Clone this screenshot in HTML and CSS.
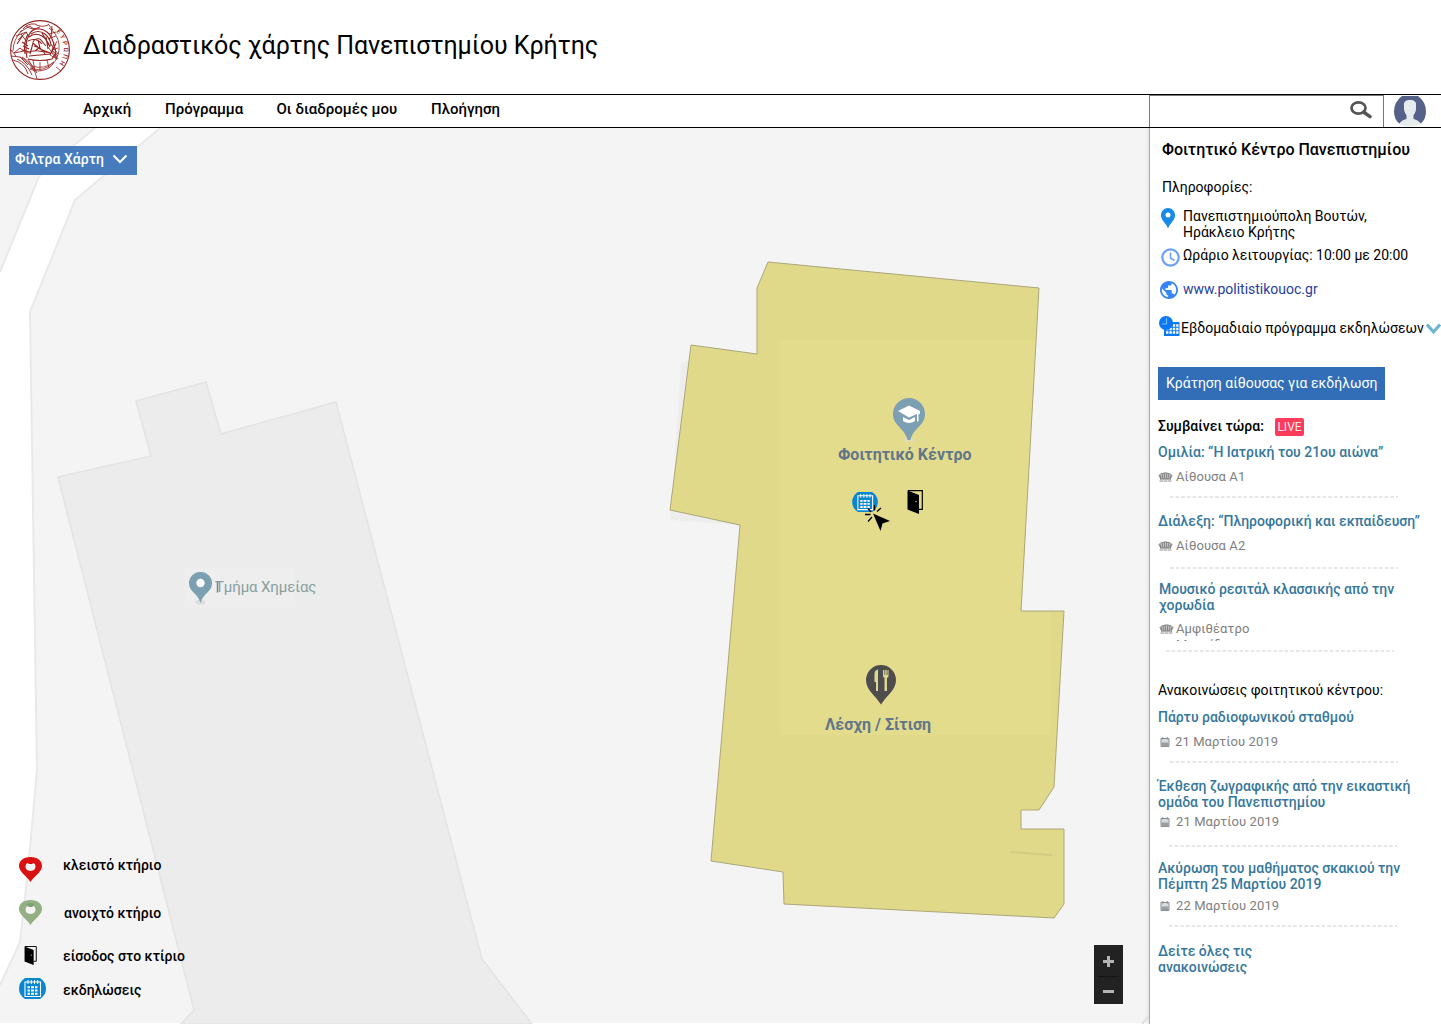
FILE: index.html
```html
<!DOCTYPE html>
<html lang="el">
<head>
<meta charset="utf-8">
<title>Διαδραστικός χάρτης Πανεπιστημίου Κρήτης</title>
<link rel="stylesheet" href="styles.css">
</head>
<body>
<svg width="0" height="0" class="defs">
  <symbol id="door" viewBox="0 0 16 24"><path d="M1 .6h14.300v18.700H12" fill="none" stroke="#000" stroke-width="1.200"/><path d="M.500.500l11.500 4.500v19L.500 19.500z"/><circle cx="9" cy="11.500" r=".7" fill="#e4dc8d"/></symbol>
  <symbol id="events" viewBox="0 0 27 21"><path d="M6 0h15q6 4 6 10.500T21 21H6Q0 17 0 10.500T6 0z" fill="#0a86d1"/><path d="M6 4h15.500v14.500H6z" fill="none" stroke="#fff" stroke-width="1.100"/><path d="M9 2v4M12.300 2v4M15.500 2v4M18.700 2v4" stroke="#fff" stroke-width="1"/><path d="M8.500 9.300h2.500m1 0h3m1 0h2.500M8.500 12.500h2.500m1 0h3m1 0h2.500M8.500 15.700h2.500m1 0h3m1 0h2.500" stroke="#fff" stroke-width="2"/></symbol>
  <symbol id="seats" viewBox="0 0 15 10"><path d="M1 5Q.500 2.500 3.500 1.500Q7.500 0 11.500 1.500q3 1 2.500 3.500l-2 3H3z" fill="#c4c4c4"/><path d="M2.500 2Q7.500-.5 12.500 2M4 2l1 4.500M6.300 1.200l.3 5.300M8.700 1.200l-.3 5.300M11 2l-1 4.500M.500 3.500q2 0 2.300 4.500M14.500 3.500q-2 0-2.300 4.500M4 6.800h7M1.500 9h4M6 9h3M9.500 9h4M1.500 2.500l2 4M13.500 2.500l-2 4" fill="none" stroke="#757575" stroke-width=".8"/></symbol>
  <symbol id="cal" viewBox="0 0 10 10"><path d="M1 1.500h8v8H1z" fill="#d9dbdd" stroke="#8c9094" stroke-width="1"/><path d="M2.800 0v2.500M7.200 0v2.500" stroke="#82878b"/><path d="M1.500 5.500h7v3.500h-7z" fill="#9a9ea2"/></symbol>
  <symbol id="dash" viewBox="0 0 228 2"><path d="M0 1h228" stroke="#dedede" stroke-width="1.400" stroke-dasharray="3.500 2.150"/></symbol>
</svg>

<header class="top">
  <svg class="seal" viewBox="0 0 60 60" fill="none" stroke="#93211f">
    <circle cx="30" cy="30" r="29.400" stroke-width="1.100"/>
    <path d="M44 12Q50 20 49 30C48 38 43 46 37 49Q28 53 20 49M12 10Q3 20 3 31M46 47l5 4M25 52l2 7" stroke-width=".8"/>
    <path d="M4 33l6-5 4 3M1 30l5 6M1 36l9 1 8 8M4 33l10-2M10 37q8 4 15 15M7 39q10 4 15 16M12 37q9 5 15 16M3 40q12 3 15 14M13 9q5-6 12-5q6 4 13 1M16 6q6 5 14 1M10 12l10-6 5 4M6 16l10-4 3 5M8 20q5-6 9-8M11 14l6 8M42 6l-1 12M39 8l6 5M46 12l-7 2M38 4l5 6M46 16l-8 3" stroke-width=".9"/>
    <path d="M12 30l8 2M13 26l6 3M12 22l6 4M7 24l6-9M17 38q-3-14 2-23q3-7 11-6q8 1 12 10q4 9 4 19M15 34q-2-11 3-20M21 14q7-5 14 0q6 5 6 12M19 17q6-5 13-1q5 3 8 11M18 21q8-4 14 3M20 34l3-11 7 6 10 4M23 22q2-4 7-3l6 7M17 33q6-3 12-2l12 2M19 36l22-2M18 39q12 3 24 0l3-5M24 26l6 2 5 6M25 31l5-4M28 20l2 8M36 17l2 12M32 13l8 14" stroke-width="1.100"/>
    <path d="M44 22l-3 12M46 24l-4 7 6 8M41 24l7 10M47 21l-7 14 7 4M48 28l-6 2 6 6M38 27l9 13M22 46q12 4 22-4M20 48q14 5 24-6M30 42v9M37 40l2 8M23 40l2 11M18 39l5 9" stroke-width=".8"/>
    <path id="sealArc" d="M46 12A23.800 23.800 0 0 1 43 49.500" stroke="none"/>
    <text class="seal-text" stroke="none"><textPath href="#sealArc" startOffset="0">ΕΥΡΩΠΗ</textPath></text>
  </svg>
  <h1>Διαδραστικός χάρτης Πανεπιστημίου Κρήτης</h1>
</header>

<nav class="bar">
  <div class="links">
    <a class="l1">Αρχική</a><a class="l2">Πρόγραμμα</a><a class="l3">Οι διαδρομές μου</a><a class="l4">Πλοήγηση</a>
  </div>
  <div class="search">
    <svg width="22" height="18" viewBox="0 0 22 18" fill="none" stroke="#555"><ellipse cx="8.500" cy="7" rx="7" ry="5.600" stroke-width="2.700"/><path d="M13.500 11l6.500 4.700" stroke-width="3.400" stroke-linecap="round"/></svg>
  </div>
  <svg class="avatar" width="32" height="31" viewBox="0 0 32 31"><path d="M8 0h16q8 6 8 15.500Q32 24 26 28q-2-3-7-4v-5q3-3 3-8 1-7-6-7t-6 7q0 5 3 8v5q-5 1-7 4-6-4-6-12.500Q0 6 8 0z" fill="#56618a"/><path d="M16 4q7 0 6 7-.5 6-2.500 8v4q5 1 7.500 5-4 2.500-11 2.500T5 28q2.500-4 7.500-5v-4q-2-2-2.500-8-1-7 6-7z" fill="#e6eced"/></svg>
</nav>

<div class="main">
  <section class="map">
    <svg class="terrain" viewBox="0 128 1149 896">
      <path d="M0 128h1149v895H0z" fill="#f4f4f4"/>
      <path d="M95 128L50 165Q40 172 36 184L0 272V985L20 942L28 870L37 770L30 312L75 200L160 128z" fill="#fff"/>
      <path d="M95 128L50 165Q40 172 36 184L0 272M0 985L20 942L28 870L37 770L30 312L75 200L160 128" fill="none" stroke="#e9e9e9" stroke-width="2"/>
      <path d="M58 477L151 456L136 401L206 382L221 434L336 402L482 959L532 1024H181L194 1010z" fill="#ececec" stroke="#e3e3e3" stroke-width="1.500"/>
      <path d="M185 568h110v39H185z" fill="#eeeeee"/>
      <path d="M681 363l8-3-16 150 65 14v1l-67-5z" fill="#ededed"/>
      <path d="M768 262L1039 288L1021 611H1064L1054 787L1039 810H1021V829H1064V904L1054 918L784 904L783 872L711 861L740 525L670 510L691 345L757 354V288z" fill="#e1d98a"/>
      <path d="M780 340H1036L1021 611H1050V735H780z" fill="#e4dc8d"/>
      <path d="M768 262L1039 288L1021 611H1064L1054 787L1039 810H1021V829H1064V904L1054 918L784 904L783 872L711 861L740 525L670 510L691 345L757 354V288z" fill="none" stroke="#aba779"/>
      <path d="M1010 852l42 3" stroke="#d3cb81" stroke-width="2"/>
      <path d="M1142 1024l7-8" stroke="#e0e0e0" stroke-width="2"/>
    </svg>

    <button class="filter">Φίλτρα Χάρτη
      <svg width="16" height="10" viewBox="0 0 16 10"><path d="M1.500 1.500L8 8l6.500-6.500" fill="none" stroke="#fff" stroke-width="2"/></svg>
    </button>

    <svg class="pin chem" width="23" height="34" viewBox="0 0 23 34"><ellipse cx="11.500" cy="30" rx="5" ry="2.500" fill="#dcdcdc"/><path d="M11.500 0A11.300 11.300 0 0 1 23 11.500C23 20 14 21 11.500 31C9 21 0 20 0 11.500A11.300 11.300 0 0 1 11.500 0z" fill="#7aa0b1"/><circle cx="11.500" cy="11" r="4.200" fill="#fff"/></svg>
    <span class="label chem-t">Τμήμα Χημείας</span>
    <svg class="pin tick" width="3" height="12" viewBox="0 0 3 12"><path d="M1.500 0v10.500" stroke="#6f8a94" stroke-width="1.500"/></svg>

    <svg class="pin stud" width="32" height="45" viewBox="0 0 32 45"><path d="M15 36l-4 8 4-1 1-3 1 3 4 1-4-8z" fill="#dcdcd4"/><path d="M16 0a16 16 0 0 1 16 16c0 12-12 14-14.500 26h-3C12 30 0 28 0 16A16 16 0 0 1 16 0z" fill="#7c9fb1"/><path d="M5 13L16 7.500 27 13v3h-1.500v7.500H24V16l-8 3.500z" fill="#fff"/><path d="M10 19l6 3 6-3v4q-6 4-12 0z" fill="#fff"/></svg>
    <span class="label stud-t">Φοιτητικό Κέντρο</span>

    <svg class="pin ev" width="26" height="20"><use href="#events"/></svg>
    <svg class="pin click" width="26" height="26" viewBox="0 0 26 26"><path d="M8 8.500L25 16l-7.500 2.500L15.500 26z"/><path d="M9.500 5.500V0M12 6.500l4-3.500M5.500 9.500H0M7 12l-4 4.500M6 7L3 3.500" stroke="#000" stroke-width="1.300"/></svg>
    <svg class="pin entrance" width="16" height="24"><use href="#door"/></svg>

    <svg class="pin food" width="30" height="40" viewBox="0 0 30 40"><path d="M15 0A15 15 0 0 1 30 15c0 10-9 15-15 24.500C9 30 0 25 0 15A15 15 0 0 1 15 0z" fill="#4d4d4d"/><path d="M8.500 17V9q0-4 3.500-4.500V26h-2v-9zM17 5v6q0 1.500 1.500 1.800V26h2.500V12.800Q22.500 12.500 22.500 11V5h-1v5h-.8V5h-1.500v5h-.8V5z" fill="#ded691"/></svg>
    <span class="label food-t">Λέσχη / Σίτιση</span>

    <ul class="legend">
      <li class="g1"><svg width="23" height="25" viewBox="0 0 23 25"><path d="M11.500 0C19 0 23 4 23 9c0 6-7 9-11.500 16C7 18 0 15 0 9 0 4 4 0 11.500 0z" fill="#d91111"/><path d="M6.500 9.500q0-3 2-3.500l1.500 1h3l1.500-1q2 .5 2 3.500 0 4-5 4.500-5-.5-5-4.500z" fill="#f4f4f4"/></svg><span>κλειστό κτήριο</span></li>
      <li class="g2"><svg width="23" height="25" viewBox="0 0 23 25"><path d="M11.500 0C19 0 23 4 23 9c0 6-7 9-11.500 16C7 18 0 15 0 9 0 4 4 0 11.500 0z" fill="#93b085"/><path d="M7.500 4q4-2 8 0l-2 3h-4z" fill="#80a272"/><path d="M6.500 9.500q0-3 2-3.500l1.500 1h3l1.500-1q2 .5 2 3.500 0 4-5 4.500-5-.5-5-4.500z" fill="#f4f4f4"/></svg><span>ανοιχτό κτήριο</span></li>
      <li class="g3"><svg width="13" height="19"><use href="#door"/></svg><span>είσοδος στο κτίριο</span></li>
      <li class="g4"><svg width="27" height="21"><use href="#events"/></svg><span>εκδηλώσεις</span></li>
    </ul>

    <div class="zoom">
      <svg width="29" height="59" viewBox="0 0 29 59"><path d="M14.500 11v11M9 16.500h11M9 46.500h11" stroke="#b4b4b4" stroke-width="3"/><path d="M4 31.500h21" stroke="#151515"/></svg>
    </div>
  </section>

  <aside class="side">
    <h2>Φοιτητικό Κέντρο Πανεπιστημίου</h2>
    <p class="info-h">Πληροφορίες:</p>
    <div class="row address"><svg width="14" height="21" viewBox="0 0 14 21"><path d="M7 0a7 7 0 0 1 7 7.500C14 12 9 15 7 20.500 5 15 0 12 0 7.500A7 7 0 0 1 7 0z" fill="#158ae8"/><circle cx="7" cy="7" r="2.500" fill="#fff"/></svg><span>Πανεπιστημιούπολη Βουτών,<br>Ηράκλειο Κρήτης</span></div>
    <div class="row hours"><svg width="19" height="19" viewBox="0 0 19 19" fill="none" stroke="#6b9ff8"><circle cx="9.500" cy="9.500" r="8.200" stroke-width="2.200"/><path d="M9.500 4.500v5.500l4 2.500" stroke-width="1.500"/></svg><span>Ωράριο λειτουργίας: 10:00 με 20:00</span></div>
    <div class="row site"><svg width="18" height="18" viewBox="2 2 20 20"><path d="M12 2C6.480 2 2 6.480 2 12s4.480 10 10 10 10-4.480 10-10S17.520 2 12 2zm-1 17.930c-3.950-.49-7-3.850-7-7.930 0-.62.080-1.210.210-1.790L9 15v1c0 1.100.9 2 2 2v1.930zm6.900-2.540c-.26-.81-1-1.390-1.900-1.390h-1v-3c0-.55-.45-1-1-1H8v-2h2c.55 0 1-.45 1-1V7h2c1.100 0 2-.9 2-2v-.41c2.930 1.190 5 4.060 5 7.410 0 2.080-.8 3.970-2.100 5.390z" fill="#3585f5"/></svg><a>www.politistikouoc.gr</a></div>
    <div class="row weekly"><svg width="21" height="20" viewBox="0 0 21 20"><path d="M5 5h15.500v15H5z" fill="#0a78f5"/><path d="M7 9.500h12.500M7 13h12.500M7 16.500h12.500" stroke="#fff" stroke-width="2.300" stroke-dasharray="2.400 1"/><path d="M13 4.500h8v1.500h-8z" fill="#fff"/><circle cx="7" cy="7" r="7" fill="#0a78f5"/><path d="M7.500 2v6H3" fill="none" stroke="#7bb9ff" stroke-width="1.200"/></svg><span>Εβδομαδιαίο πρόγραμμα εκδηλώσεων</span><svg class="more" width="15" height="12" viewBox="0 0 15 12"><path d="M1 1.500l6.500 7.500 6.500-7.500" fill="none" stroke="#6cb4d0" stroke-width="3"/></svg></div>
    <button class="book">Κράτηση αίθουσας για εκδήλωση</button>

    <div class="now"><strong>Συμβαίνει τώρα:</strong><span class="live">LIVE</span></div>
    <h3 class="e1">Ομιλία: “Η Ιατρική του 21ου αιώνα”</h3>
    <div class="place"><svg width="15" height="10"><use href="#seats"/></svg>Αίθουσα Α1</div>
    <svg class="sep s1"><use href="#dash"/></svg>
    <h3 class="e2">Διάλεξη: “Πληροφορική και εκπαίδευση”</h3>
    <div class="place"><svg width="15" height="10"><use href="#seats"/></svg>Αίθουσα Α2</div>
    <svg class="sep s2"><use href="#dash"/></svg>
    <h3 class="e3">Μουσικό ρεσιτάλ κλασσικής από την<br>χορωδία</h3>
    <div class="place hall"><svg width="15" height="10"><use href="#seats"/></svg><span>Αμφιθέατρο<br>Μαρκίδης</span></div>
    <svg class="sep s3"><use href="#dash"/></svg>

    <p class="news-h">Ανακοινώσεις φοιτητικού κέντρου:</p>
    <h3 class="n1">Πάρτυ ραδιοφωνικού σταθμού</h3>
    <div class="date d1"><svg width="10" height="10"><use href="#cal"/></svg>21 Μαρτίου 2019</div>
    <svg class="sep s4"><use href="#dash"/></svg>
    <h3 class="n2">Έκθεση ζωγραφικής από την εικαστική<br>ομάδα του Πανεπιστημίου</h3>
    <div class="date d2"><svg width="10" height="10"><use href="#cal"/></svg>21 Μαρτίου 2019</div>
    <svg class="sep s5"><use href="#dash"/></svg>
    <h3 class="n3">Ακύρωση του μαθήματος σκακιού την<br>Πέμπτη 25 Μαρτίου 2019</h3>
    <div class="date d3"><svg width="10" height="10"><use href="#cal"/></svg>22 Μαρτίου 2019</div>
    <svg class="sep s6"><use href="#dash"/></svg>
    <h3 class="n4">Δείτε όλες τις<br>ανακοινώσεις</h3>
  </aside>
</div>
</body>
</html>
```
FILE: styles.css
```css
* { box-sizing: border-box; }
html, body { height: 1024px; overflow: hidden; }
body { margin: 0; background: #fff; color: #000; font: 14px/16px Roboto, "Noto Sans", sans-serif; }
h1, h2, h3, p, ul { margin: 0; padding: 0; font-weight: 400; }
svg { display: block; flex: none; }
.defs { display: none; }
button { border: 0; margin: 0; font: inherit; color: #fff; text-align: left; }

.top { height: 94px; display: flex; align-items: flex-start; padding: 20px 0 0 10px; }
.seal { width: 60px; height: 60px; }
.seal-text { font: 500 6.5px Roboto, sans-serif; fill: #93211f; letter-spacing: 1.9px; }
h1 { font-size: 25px; line-height: 30px; margin: 11px 0 0 13px; letter-spacing: -0.05px; white-space: nowrap; }

.bar { height: 34px; border-top: 1px solid #000; border-bottom: 1px solid #000; display: flex; }
.links { width: 1149px; display: flex; padding: 5px 0 0 83px; font-size: 15px; line-height: 18px; font-weight: 500; white-space: nowrap; }
.l1 { width: 82px; letter-spacing: -0.1px; } .l2 { width: 111.5px; } .l3 { width: 154.5px; }
.search { width: 235px; border: 1px solid #777; border-bottom: 0; display: flex; justify-content: flex-end; padding: 5px 11px 0 0; }
.avatar { margin: 1px 0 0 10px; }

.main { display: flex; height: 896px; overflow: hidden; }
.map { position: relative; width: 1149px; }
.terrain { width: 1149px; height: 896px; }
.filter { position: absolute; left: 9px; top: 18px; width: 128px; height: 29px; padding: 0 0 3px 6px; background: #467bbd; display: flex; align-items: center; gap: 8px; font-weight: 500; letter-spacing: 0.1px; white-space: nowrap; }
.pin, .label { position: absolute; white-space: nowrap; }
.label { font-size: 16px; line-height: 18px; font-weight: 700; color: #61768a; }
.chem { left: 189px; top: 444px; }
.chem-t { left: 215px; top: 450px; font-size: 15px; font-weight: 400; letter-spacing: -0.1px; color: #87a09d; }
.tick { left: 216px; top: 454px; }
.stud { left: 893px; top: 270px; }
.stud-t { left: 838px; top: 318px; }
.ev { left: 852px; top: 364px; }
.click { left: 865px; top: 377px; }
.entrance { left: 907px; top: 362px; }
.food { left: 866px; top: 537px; }
.food-t { left: 825px; top: 588px; }
.legend { position: absolute; left: 19px; top: 729px; list-style: none; font-weight: 500; }
.legend li { display: flex; white-space: nowrap; }
.g1 span { margin-left: 21px; } .g2 span { margin: 5px 0 0 22px; } .g2 { margin-top: 18px; }
.g3 { margin: 21px 0 0 5px; } .g3 span { margin: 2px 0 0 26px; }
.g4 { margin-top: 13px; } .g4 span { margin: 4px 0 0 17px; }
.zoom { position: absolute; left: 1094px; top: 817px; background: #222; }

.side { position: relative; width: 292px; border-left: 1px solid #aaa; box-shadow: -1px 0 3px #ddd; background: #fff; padding: 13px 0 0 8px; overflow: hidden; white-space: nowrap; }
h2 { font-size: 16px; line-height: 18px; font-weight: 500; margin-left: 4px; }
.info-h { margin: 20px 0 0 4px; }
.row { display: flex; }
.address { margin-top: 13px; padding-left: 3px; gap: 8px; }
.hours { margin-top: 7px; padding-left: 3px; gap: 3px; height: 20px; }
.hours svg { margin-top: 1px; }
.site { margin-top: 14px; padding-left: 2px; gap: 5px; color: #2440a0; height: 18px; }
.weekly { margin-top: 17px; padding-left: 1px; height: 20px; gap: 1px; }
.weekly span { margin-top: 4px; width: 244px; }
.weekly .more { margin-top: 7px; }
.book { display: block; width: 227px; height: 33px; margin-top: 31px; padding: 0 0 2px 8px; background: #316eb7; }
.now { display: flex; margin-top: 18px; height: 18px; }
.now strong { font-weight: 500; width: 117px; }
.live { width: 29px; height: 18px; border-radius: 2px; background: #fd3c5b; color: #ffe9ec; font-size: 12px; line-height: 19px; text-align: center; }
h3 { font-size: 14px; line-height: 16px; font-weight: 500; color: #36779c; }
.e1 { margin-top: 8px; } .e2 { margin-top: 15px; } .e3 { margin: 12px 0 0 1px; }
.place, .date { display: flex; font-size: 13px; letter-spacing: 0.1px; line-height: 16px; color: #808080; height: 16px; }
.place { margin-top: 9px; gap: 3px; }
.place svg { margin-top: 3px; }
.hall { margin-top: 8px; height: 20px; overflow: hidden; padding-left: 1px; gap: 2px; }
.date svg { margin: 3px 0 0 2px; }
.date { gap: 6px; }
.sep { width: 228px; height: 2px; margin-left: 12px; }
.s1 { margin-top: 11px; } .s2 { margin-top: 13px; } .s3 { margin: 9px 0 0 8px; }
.news-h { margin-top: 30px; }
.n1 { margin-top: 11px; } .d1 { margin-top: 9px; gap: 5px; } .s4 { margin-top: 11px; }
.n2 { margin-top: 15px; } .d2 { margin-top: 4px; } .s5 { margin: 15px 0 0 11px; }
.n3 { margin-top: 13px; } .d3 { margin-top: 6px; } .s6 { margin: 11px 0 0 11px; }
.n4 { margin-top: 16px; }
```
